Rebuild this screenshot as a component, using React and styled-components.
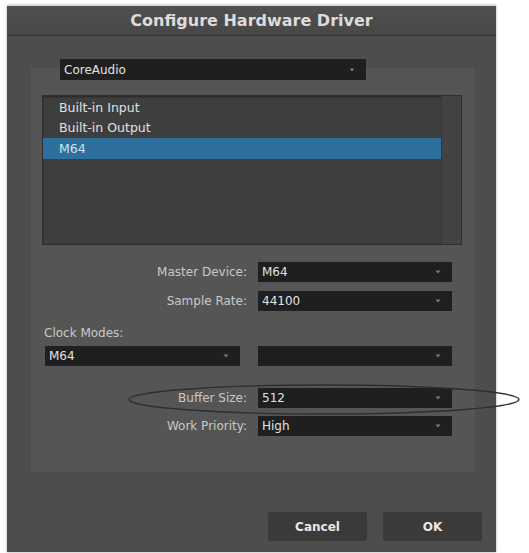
import styled, { createGlobalStyle } from "styled-components";

const GlobalStyle = createGlobalStyle`
  html, body {
    margin: 0;
    padding: 0;
    background: #ffffff;
  }
  body {
    font-family: "DejaVu Sans", "Liberation Sans", sans-serif;
  }
`;

const devices = ["Built-in Input", "Built-in Output", "M64"];

const Arrow = () => (
  <svg width="8" height="6" viewBox="0 0 8 6">
    <path d="M1.5 1.5 L4 4.5 L6.5 1.5 Z" fill="#7c7c7c" />
  </svg>
);

const Select = ({ value, width, className }) => (
  <SelectBox $width={width} className={className}>
    <span>{value}</span>
    <Arrow />
  </SelectBox>
);

const App = () => {
  return (
    <Page>
      <GlobalStyle />
      <Dialog>
        <TitleBar>Configure Hardware Driver</TitleBar>
        <Body>
          <DriverSelect value="CoreAudio" width={306} />
          <Panel>
            <ListBox>
              <Items>
                {devices.map((d) => (
                  <Item key={d} $selected={d === "M64"}>
                    {d}
                  </Item>
                ))}
              </Items>
              <ScrollTrack />
            </ListBox>

            <FieldRow $top={17}>
              <FieldLabel>Master Device:</FieldLabel>
              <Select value="M64" width={194} />
            </FieldRow>
            <FieldRow $top={9}>
              <FieldLabel>Sample Rate:</FieldLabel>
              <Select value="44100" width={194} />
            </FieldRow>

            <ClockLabel>Clock Modes:</ClockLabel>
            <ClockRow>
              <Select value="M64" width={195} />
              <Select value="" width={194} />
            </ClockRow>

            <FieldRow $top={22}>
              <FieldLabel>Buffer Size:</FieldLabel>
              <Select value="512" width={194} />
            </FieldRow>
            <FieldRow $top={8}>
              <FieldLabel>Work Priority:</FieldLabel>
              <Select value="High" width={194} />
            </FieldRow>
          </Panel>
        </Body>
        <Footer>
          <Button>Cancel</Button>
          <Button>OK</Button>
        </Footer>
      </Dialog>
      <Annotation width="400" height="36" viewBox="0 0 400 36">
        <ellipse cx="197" cy="17.5" rx="195" ry="14.5" fill="none" stroke="#2e2e2e" strokeWidth="1.4" />
      </Annotation>
    </Page>
  );
};

const Page = styled.div`
  position: relative;
  width: 529px;
  height: 553px;
  padding: 5px 0 0 7px;
  box-sizing: border-box;
  overflow: hidden;
`;

const Dialog = styled.div`
  width: 489px;
  height: 547px;
  background: #4d4d4d;
  display: flex;
  flex-direction: column;
  border-top: 1px solid #d8d8d8;
  box-sizing: border-box;
  box-shadow: 0 0 2px rgba(0, 0, 0, 0.4);
`;

const TitleBar = styled.div`
  height: 29px;
  display: flex;
  align-items: center;
  justify-content: center;
  background: linear-gradient(#505050, #474747);
  border-bottom: 1px solid #363636;
  color: #dcdcdc;
  font-size: 16px;
  font-weight: bold;
`;

const Body = styled.div`
  padding: 23px 21px 0 24px;
  display: flex;
  flex-direction: column;
`;

const SelectBox = styled.div`
  width: ${({ $width }) => $width}px;
  height: 20px;
  flex: none;
  background: #1f1f1f;
  color: #e2e2e2;
  font-size: 12px;
  display: flex;
  align-items: center;
  justify-content: space-between;
  padding: 0 10px 0 4px;
  box-sizing: border-box;

  span {
    white-space: nowrap;
  }
`;

const DriverSelect = styled(Select)`
  height: 21px;
  margin-left: 29px;
  position: relative;
  z-index: 1;
`;

const Panel = styled.div`
  margin-top: -12px;
  height: 404px;
  background: #555555;
  padding: 27px 0 0 11px;
  box-sizing: border-box;
  display: flex;
  flex-direction: column;
`;

const ListBox = styled.div`
  width: 420px;
  height: 150px;
  background: #3e3e3e;
  border: 1px solid #2f2f2f;
  box-sizing: border-box;
  display: flex;
  box-shadow: inset 0 1px 2px rgba(0, 0, 0, 0.4);
`;

const Items = styled.div`
  flex: 1;
  padding-top: 1px;
`;

const Item = styled.div`
  height: 20.5px;
  display: flex;
  align-items: center;
  padding-left: 16px;
  font-size: 12.5px;
  color: ${({ $selected }) => ($selected ? "#cfe0ee" : "#e2e2e2")};
  background: ${({ $selected }) => ($selected ? "#2d6f9d" : "transparent")};
`;

const ScrollTrack = styled.div`
  width: 20px;
  background: #434343;
  border-left: 1px solid #363636;
  box-sizing: border-box;
`;

const FieldRow = styled.div`
  display: flex;
  align-items: center;
  gap: 11px;
  margin-top: ${({ $top }) => $top}px;
`;

const FieldLabel = styled.div`
  width: 205px;
  text-align: right;
  font-size: 12px;
  color: #c9c9c9;
  white-space: nowrap;
`;

const ClockLabel = styled.div`
  margin: 15px 0 0 2px;
  font-size: 12px;
  line-height: 14px;
  color: #c9c9c9;
`;

const ClockRow = styled.div`
  display: flex;
  gap: 18px;
  margin: 6px 0 0 3px;
`;

const Footer = styled.div`
  margin-top: auto;
  display: flex;
  justify-content: flex-end;
  gap: 16px;
  padding: 0 14px 11px 0;
`;

const Button = styled.div`
  width: 99px;
  height: 29px;
  background: #3a3a3a;
  border-radius: 2px;
  display: flex;
  align-items: center;
  justify-content: center;
  color: #e8e8e8;
  font-size: 12px;
  font-weight: bold;
`;

const Annotation = styled.svg`
  position: absolute;
  left: 127px;
  top: 382px;
  pointer-events: none;
`;

export default App;
